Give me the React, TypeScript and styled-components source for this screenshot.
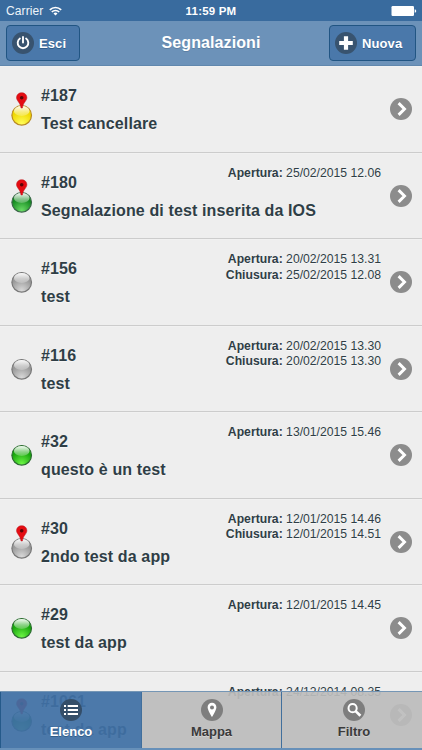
import React from 'react';
import styled, { createGlobalStyle, css } from 'styled-components';

const Global = createGlobalStyle`
  *, *::before, *::after { box-sizing: border-box; }
  html, body { margin: 0; padding: 0; overflow: hidden; }
  body { font-family: "Liberation Sans", Arial, Helvetica, sans-serif; color: #2f3e46; }
  button { font-family: inherit; cursor: pointer; }
`;

const Screen = styled.div`
  position: relative;
  display: flex;
  flex-direction: column;
  width: 100%;
  height: 750px;
  overflow: hidden;
  background: #eeeeee;
`;

const StatusBar = styled.div`
  flex: none;
  display: grid;
  grid-template-columns: 1fr auto 1fr;
  align-items: center;
  height: 21px;
  padding: 1px 6px 0;
  background: #396b9e;
  color: #fff;
  font-size: 12px;
`;

const Carrier = styled.div`
  display: flex;
  align-items: center;
  gap: 6px;
  letter-spacing: 0.1px;
  color: #eef4fa;
`;

const Clock = styled.div`
  font-weight: bold;
  font-size: 11.5px;
  letter-spacing: 0.2px;
`;

const Battery = styled.div`
  justify-self: end;
  display: flex;
  margin-right: -1px;
`;

const Header = styled.header`
  flex: none;
  display: flex;
  align-items: center;
  justify-content: space-between;
  height: 45px;
  padding: 0 6px 1px;
  background: #6c92b9;
  border-bottom: 1px solid #6087ad;
`;

const Title = styled.h1`
  flex: 1;
  margin: 1px 0 0 13px;
  text-align: center;
  font-size: 16px;
  line-height: 20px;
  letter-spacing: 0.1px;
  color: #fff;
  text-shadow: 0 1px 0 #5c7fa3;
`;

const HeaderButton = styled.button<{ $width: number }>`
  display: flex;
  align-items: center;
  gap: 5px;
  width: ${(p) => p.$width}px;
  height: 36px;
  padding: 1px 5px 0;
  border: 1px solid #215583;
  border-radius: 4px;
  background: #4a78aa;
  color: #fff;
  font-size: 13px;
  font-weight: bold;
  letter-spacing: 0.1px;
  text-shadow: 0 1px 0 #2f5b88;
`;

const List = styled.ul`
  flex: none;
  margin: 0;
  padding: 0;
  list-style: none;
`;

const Row = styled.li`
  display: grid;
  grid-template-columns: 30px 1fr auto 41px;
  height: 86.5px;
  padding: 0 0 0 11px;
  border-bottom: 1px solid #cccccc;
  box-shadow: inset 0 1px 0 #f1f1f1;
  text-shadow: 0 1px 0 #f6f6f6;
`;

const Marker = styled.div`
  display: flex;
  align-items: center;
  height: 86px;
`;

const Content = styled.div`
  grid-column: 2 / 4;
  grid-row: 1;
  padding-top: 16px;
  font-size: 16px;
  font-weight: bold;
  line-height: 28px;
  letter-spacing: 0.13px;
  white-space: nowrap;
`;

const Dates = styled.div`
  grid-column: 3;
  grid-row: 1;
  padding-top: 13px;
  text-align: right;
  font-size: 12.2px;
  line-height: 15.5px;
  white-space: nowrap;
`;

const Arrow = styled.div`
  grid-column: 4;
  grid-row: 1;
  display: flex;
  align-items: center;
  height: 86px;
  padding-left: 9px;
`;

const TabBar = styled.nav`
  position: absolute;
  left: 0;
  right: 0;
  bottom: 0;
  display: grid;
  grid-template-columns: 141px 140px 1fr;
  height: 59.5px;
  border-top: 1px solid #7596b5;
  border-bottom: 2px solid #6790b9;
`;

const Tab = styled.button<{ $active?: boolean; $shift?: number }>`
  display: flex;
  flex-direction: column;
  align-items: center;
  gap: 2px;
  padding: 7.5px 0 0 ${(p) => p.$shift ?? 0}px;
  border: 0;
  border-left: 1px solid #416f9c;
  background: rgba(188, 188, 188, 0.92);
  color: #3b3b3b;
  font-size: 13px;
  font-weight: bold;
  line-height: 18px;
  text-shadow: 0 1px 0 #d4d4d4;
  ${(p) =>
    p.$active &&
    css`
      border-left-color: #255a8a;
      background: rgba(64, 112, 165, 0.93);
      color: #fff;
      text-shadow: 0 1px 0 #315d8a;
    `}
`;

type Glyph = 'power' | 'plus' | 'arrow' | 'list' | 'pin' | 'search';

const glyphs: Record<Glyph, React.ReactNode> = {
  power: (
    <g fill="none" stroke="#fff" strokeWidth="1.9" strokeLinecap="round">
      <path d="M7.9 6.6a5.3 5.3 0 1 0 6.2 0" />
      <path d="M11 5v5.6" />
    </g>
  ),
  plus: <path d="M8.9 4.2h4.2v4.7h4.7v4.2h-4.7v4.7H8.9v-4.7H4.2V8.9h4.7z" fill="#fff" />,
  arrow: <path d="m8.6 5.1 5.9 5.9-5.9 5.9" fill="none" stroke="#fff" strokeWidth="2.9" />,
  list: (
    <path
      d="M4 6h2v2H4zm3.7 0H18v2H7.7zM4 10h2v2H4zm3.7 0H18v2H7.7zM4 14h2v2H4zm3.7 0H18v2H7.7z"
      fill="#fff"
    />
  ),
  pin: (
    <path
      d="M11 3.8A4.4 4.4 0 0 0 6.6 8.2C6.6 11.3 11 18 11 18s4.4-6.7 4.4-9.8A4.4 4.4 0 0 0 11 3.8zm0 2.7a2 2 0 1 1 0 4 2 2 0 0 1 0-4z"
      fill="#fff"
      fillRule="evenodd"
    />
  ),
  search: (
    <g fill="none" stroke="#fff">
      <circle cx="9.6" cy="9.2" r="4.1" strokeWidth="2" />
      <path d="m12.6 12.1 4.8 4.7" strokeWidth="2.7" />
    </g>
  ),
};

function DiscIcon({ glyph, fill = '#8c8c8c' }: { glyph: Glyph; fill?: string }) {
  return (
    <svg width="22" height="22" viewBox="0 0 22 22">
      <circle cx="11" cy="11" r="11" fill={fill} />
      {glyphs[glyph]}
    </svg>
  );
}

type Color = 'yellow' | 'green' | 'darkgreen' | 'gray';

const ballColors: Record<Color, { mid: string; low: string; edge: string }> = {
  yellow: { mid: '#f0d800', low: '#fffd5a', edge: '#b88a24' },
  green: { mid: '#17a50c', low: '#6cf545', edge: '#2c6a31' },
  darkgreen: { mid: '#148a20', low: '#6bdc66', edge: '#3a6648' },
  gray: { mid: '#989898', low: '#d8d8d8', edge: '#777777' },
};

function Ball({ color, pinned }: { color: Color; pinned?: boolean }) {
  const c = ballColors[color];
  return (
    <svg width="22" height="36" viewBox="0 0 22 36">
      <defs>
        <radialGradient id={`body-${color}`} cx="0.5" cy="0.92" r="0.62">
          <stop offset="0" stopColor={c.low} />
          <stop offset="1" stopColor={c.mid} />
        </radialGradient>
        <linearGradient id="shine" x1="0" y1="0" x2="0" y2="1">
          <stop offset="0" stopColor="#fff" stopOpacity="0.95" />
          <stop offset="1" stopColor="#fff" stopOpacity="0.2" />
        </linearGradient>
      </defs>
      <g transform={pinned ? 'translate(0 6)' : undefined}>
        <circle cx="10.7" cy="18.3" r="9.8" fill={`url(#body-${color})`} stroke={c.edge} strokeWidth="1.2" />
        <ellipse cx="10.7" cy="14" rx="7.8" ry="5" fill="url(#shine)" />
      </g>
      {pinned && (
        <g>
          <path
            d="M10.7 1.7c-3 0-5.2 2.1-5.2 4.9 0 3.4 3.8 4.8 4.5 10.4h1.4c.7-5.6 4.5-7 4.5-10.4 0-2.8-2.2-4.9-5.2-4.9z"
            fill="#e40c12"
            stroke="#b91b20"
            strokeWidth="0.5"
          />
          <circle cx="10.7" cy="6.8" r="1.8" fill="#5c0406" />
        </g>
      )}
    </svg>
  );
}

interface Report {
  id: string;
  title: string;
  color: Color;
  pinned?: boolean;
  opened?: string;
  closed?: string;
}

const reports: Report[] = [
  { id: '187', title: 'Test cancellare', color: 'yellow', pinned: true },
  { id: '180', title: 'Segnalazione di test inserita da IOS', color: 'darkgreen', pinned: true, opened: '25/02/2015 12.06' },
  { id: '156', title: 'test', color: 'gray', opened: '20/02/2015 13.31', closed: '25/02/2015 12.08' },
  { id: '116', title: 'test', color: 'gray', opened: '20/02/2015 13.30', closed: '20/02/2015 13.30' },
  { id: '32', title: 'questo è un test', color: 'green', opened: '13/01/2015 15.46' },
  { id: '30', title: '2ndo test da app', color: 'gray', pinned: true, opened: '12/01/2015 14.46', closed: '12/01/2015 14.51' },
  { id: '29', title: 'test da app', color: 'green', opened: '12/01/2015 14.45' },
  { id: '1061', title: 'test da app', color: 'darkgreen', pinned: true, opened: '24/12/2014 08.35' },
];

export default function App() {
  return (
    <Screen>
      <Global />
      <StatusBar>
        <Carrier>
          Carrier
          <svg width="13" height="10" viewBox="0 0 13 10" fill="none" stroke="#fff" strokeWidth="1.7">
            <path d="M.8 3.8a8.2 8.2 0 0 1 11.4 0M2.8 6a5.3 5.3 0 0 1 7.4 0" />
            <path d="M4.5 7.5a2.9 2.9 0 0 1 4 0l-2 2.1z" fill="#fff" stroke="none" />
          </svg>
        </Carrier>
        <Clock>11:59 PM</Clock>
        <Battery>
          <svg width="26" height="10" viewBox="0 0 26 10" fill="#fff">
            <rect x="0.5" y="0" width="22.5" height="10" rx="1.2" />
            <path d="M23.7 3.2c2 .3 2 3.3 0 3.6z" />
          </svg>
        </Battery>
      </StatusBar>
      <Header>
        <HeaderButton $width={74}>
          <DiscIcon glyph="power" fill="#38536f" />
          Esci
        </HeaderButton>
        <Title>Segnalazioni</Title>
        <HeaderButton $width={87}>
          <DiscIcon glyph="plus" fill="#38536f" />
          Nuova
        </HeaderButton>
      </Header>
      <List>
        {reports.map((r) => (
          <Row key={r.id}>
            <Marker>
              <Ball color={r.color} pinned={r.pinned} />
            </Marker>
            <Content>
              <div>#{r.id}</div>
              <div>{r.title}</div>
            </Content>
            <Dates>
              {r.opened && (
                <div>
                  <b>Apertura:</b> {r.opened}
                </div>
              )}
              {r.closed && (
                <div>
                  <b>Chiusura:</b> {r.closed}
                </div>
              )}
            </Dates>
            <Arrow>
              <DiscIcon glyph="arrow" />
            </Arrow>
          </Row>
        ))}
      </List>
      <TabBar>
        <Tab $active>
          <DiscIcon glyph="list" fill="#344e69" />
          Elenco
        </Tab>
        <Tab>
          <DiscIcon glyph="pin" fill="#7e7e7e" />
          Mappa
        </Tab>
        <Tab $shift={4}>
          <DiscIcon glyph="search" fill="#7e7e7e" />
          Filtro
        </Tab>
      </TabBar>
    </Screen>
  );
}
